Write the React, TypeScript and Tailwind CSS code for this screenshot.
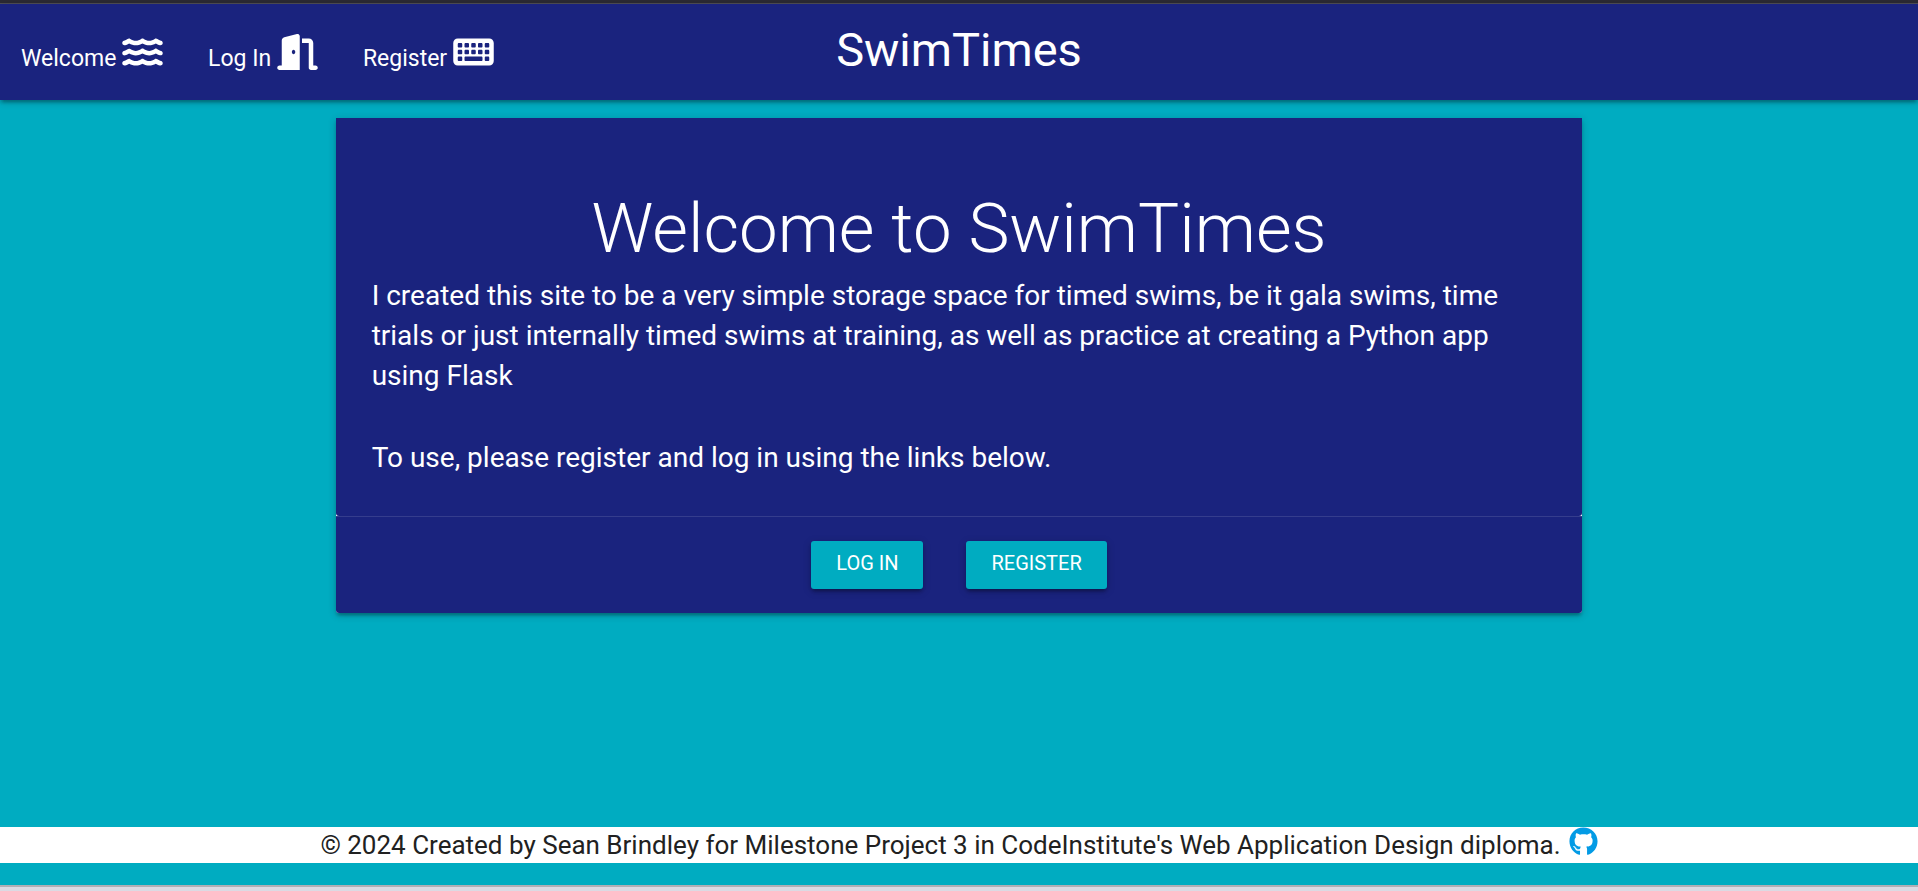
import type { ReactNode } from "react";
import { FaWater, FaDoorOpen, FaKeyboard, FaGithub } from "react-icons/fa6";

function NavItem({ label, icon }: { label: string; icon: ReactNode }) {
  return (
    <li>
      <a href="#" className="block text-[23px] leading-[36px] whitespace-nowrap">
        {label} {icon}
      </a>
    </li>
  );
}

const navIcon = "inline-block h-[36px] w-[41px] align-[-4px]";

const shadow = "shadow-[0_3px_3px_0_rgba(0,0,0,0.14),0_5px_2px_-3px_rgba(0,0,0,0.12),0_2px_8px_0_rgba(0,0,0,0.2)]";

const action = `block h-12 rounded-[3px] bg-[#00acc1] px-[25px] text-[20px] leading-[44px] uppercase text-white ${shadow}`;

export default function App() {
  return (
    <div className="flex min-h-screen flex-col bg-[#00acc1] font-['Roboto',sans-serif] text-white">
      <div className="h-1 border-b border-[#4f4e55] bg-[#2b2a33]" />
      <header className={`z-10 grid h-24 grid-cols-[1fr_auto_1fr] bg-[#1a237e] px-[21px] ${shadow}`}>
        <nav className="flex items-center">
          <ul className="flex gap-[45px] pt-1.5">
            <NavItem label="Welcome" icon={<FaWater className={navIcon} />} />
            <NavItem label="Log In" icon={<FaDoorOpen className={navIcon} />} />
            <NavItem label="Register" icon={<FaKeyboard className={navIcon} />} />
          </ul>
        </nav>
        <a href="#" className="text-[47px] leading-[92px]">
          SwimTimes
        </a>
      </header>

      <main className="mx-auto mt-[18px] w-[65%]">
        <section className={`rounded-b-[3px] bg-white ${shadow}`}>
          <div className="rounded-b-[3px] bg-[#1a237e] px-9 pt-[73px] pb-[38px]">
            <h1 className="text-center text-[69px] leading-[76px] font-light">Welcome to SwimTimes</h1>
            <p className="mt-[9px] text-[28px] leading-[40px]">
              I created this site to be a very simple storage space for timed swims, be it gala swims, time trials or
              just internally timed swims at training, as well as practice at creating a Python app using Flask
            </p>
            <p className="mt-[42px] text-[28px] leading-[40px]">
              To use, please register and log in using the links below.
            </p>
          </div>
          <div className="flex justify-center gap-[43px] rounded-b-[3px] border-t border-[#353d8d] bg-[#1a237e] py-6">
            <a href="#" className={action}>
              Log In
            </a>
            <a href="#" className={action}>
              Register
            </a>
          </div>
        </section>
      </main>

      <footer className="mt-auto mb-[22px] flex h-9 justify-center gap-2 bg-white text-[26px] leading-[36px] text-[#212121]">
        <p>© 2024 Created by Sean Brindley for Milestone Project 3 in CodeInstitute's Web Application Design diploma.</p>
        <a href="#" aria-label="GitHub" className="text-[#039be5]">
          <FaGithub className="size-[29px]" />
        </a>
      </footer>
      <div className="h-1.5 border-t-2 border-[#b1aeb5] bg-[#dbdae3]" />
    </div>
  );
}
